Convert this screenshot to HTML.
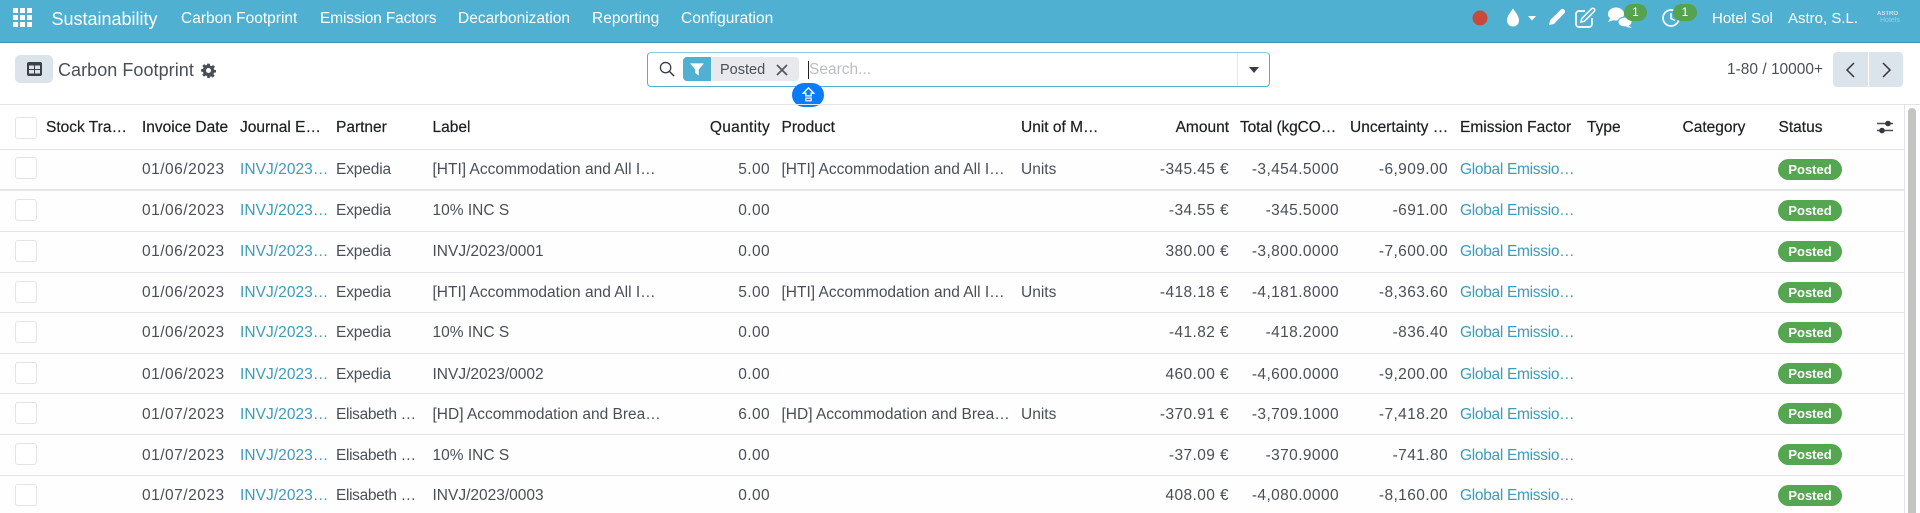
<!DOCTYPE html>
<html><head><meta charset="utf-8"><title>Carbon Footprint</title>
<style>
html,body{margin:0;padding:0;width:1920px;height:513px;overflow:hidden;background:#fff;font-family:"Liberation Sans",sans-serif;font-size:15.5px;color:#4a4f57}
*{box-sizing:border-box}
.a{position:absolute;white-space:nowrap}
#nav{position:absolute;left:0;top:0;width:1920px;height:43px;background:#4fb0d1;border-bottom:1px solid #3f98b5}
#nav .a{color:#fff;line-height:20px;top:9px}
.r{position:absolute;left:0;width:1904px;height:41px;border-bottom:1px solid #e2e4e7;background:#fefefe}
.r span{position:absolute;white-space:nowrap;line-height:20px;top:10px}
.r.x span{top:11px}
.cb{position:absolute;left:15px;top:8px;width:22px;height:22px;border:1px solid #e2e4e7;border-radius:3px;background:#fff}
.d{left:142px;letter-spacing:.5px}
.j{left:240px;color:#3d9bbb;letter-spacing:.05px}
.p{left:336px;letter-spacing:-.15px}
.l{left:432.5px}
.q{right:1134px;letter-spacing:.4px}
.pr{left:781.5px}
.u{left:1021px}
.am{right:675px;letter-spacing:.4px}
.t{right:565px;letter-spacing:.4px}
.un{right:456px;letter-spacing:.4px}
.e{left:1460px;color:#3d9bbb;letter-spacing:-.3px}
.r span.b,.r.x span.b{left:1778px;top:9px;width:64px;height:21px;background:#55a650;border-radius:11px;color:#fff;font-size:13px;font-weight:bold;text-align:center;line-height:21px}
.h{position:absolute;top:118px;line-height:20px;color:#1c2024;white-space:nowrap;-webkit-text-stroke:.2px #1c2024}
</style></head><body>
<div id="nav">
<svg class="a" style="left:13px;top:8px" width="19" height="19" viewBox="0 0 19 19" fill="#fff"><rect width="5" height="5"/><rect x="7" width="5" height="5"/><rect x="14" width="5" height="5"/><rect y="7" width="5" height="5"/><rect x="7" y="7" width="5" height="5"/><rect x="14" y="7" width="5" height="5"/><rect y="14" width="5" height="5"/><rect x="7" y="14" width="5" height="5"/><rect x="14" y="14" width="5" height="5"/></svg>
<div class="a" style="left:51.5px;font-size:18px">Sustainability</div>
<div class="a" style="left:181px">Carbon Footprint</div>
<div class="a" style="left:320px;letter-spacing:-.15px">Emission Factors</div>
<div class="a" style="left:458px">Decarbonization</div>
<div class="a" style="left:592px">Reporting</div>
<div class="a" style="left:681px">Configuration</div>
<svg class="a" style="left:1472px;top:0" width="230" height="36" viewBox="0 0 230 36">
<circle cx="8" cy="18" r="7.5" fill="#c9493f"/>
<path d="M41 8.5C44 13 47 16 47 20.5A6 6 0 0 1 35 20.5C35 16 38 13 41 8.5Z" fill="#fff"/>
<path d="M56 16h8l-4 4.5z" fill="#fff"/>
<path d="M77 25l1.200-5L89 9.500a2.500 2.500 0 0 1 3.500 3.500L82 24z" fill="#fff"/>
<path d="M113 11h-6a3 3 0 0 0-3 3v10a3 3 0 0 0 3 3h10a3 3 0 0 0 3-3v-6" fill="none" stroke="#fff" stroke-width="1.700"/>
<path d="M109 22l.8-3.500 9.700-9.700c.8-.8 2-.8 2.700 0s.8 2 0 2.700l-9.700 9.700z" fill="none" stroke="#fff" stroke-width="1.500"/>
<ellipse cx="144" cy="14" rx="8" ry="6.500" fill="#fff"/><path d="M139 17l-3 5 6-2z" fill="#fff"/>
<ellipse cx="153" cy="22" rx="7" ry="5" fill="#fff" stroke="#4fb0d1"/><path d="M156 25l4 3-6-1z" fill="#fff"/>
<circle cx="199" cy="18" r="8" fill="none" stroke="#fff" stroke-width="1.700"/><path d="M199 13v5.500l4 2" fill="none" stroke="#fff" stroke-width="1.500"/>
</svg>
<div class="a" style="left:1624px;top:4px;width:23px;height:17px;border-radius:9px;background:#55a24f;font-size:12px;line-height:17px;text-align:center">1</div>
<div class="a" style="left:1673px;top:4px;width:24px;height:17px;border-radius:9px;background:#55a24f;font-size:12px;line-height:17px;text-align:center">1</div>
<div class="a" style="left:1712px;top:9px;font-size:15px">Hotel Sol</div>
<div class="a" style="left:1788px;top:9px;font-size:15px">Astro, S.L.</div>
<div class="a" style="left:1877px;top:11px;font-size:6px;line-height:7px;font-weight:bold;opacity:.7">ASTRO</div>
<div class="a" style="left:1880px;top:17px;font-size:7px;line-height:8px;opacity:.4">Hotels</div>
</div>

<!-- toolbar -->
<div class="a" style="left:15px;top:55px;width:38px;height:28px;background:#dbe4ea;border-radius:5px"></div>
<svg class="a" style="left:27px;top:62px" width="15" height="14" viewBox="0 0 15 14"><rect width="15" height="14" rx="2" fill="#3b3f46"/><rect x="2" y="3.500" width="5" height="3.500" fill="#dbe4ea"/><rect x="8" y="3.500" width="5" height="3.500" fill="#dbe4ea"/><rect x="2" y="8" width="5" height="3.500" fill="#dbe4ea"/><rect x="8" y="8" width="5" height="3.500" fill="#dbe4ea"/></svg>
<div class="a" style="left:58px;top:59px;font-size:18px;line-height:22px;letter-spacing:.05px;color:#4a4f57">Carbon Footprint</div>
<svg class="a" style="left:201px;top:63px" width="15" height="15" viewBox="0 0 24 24"><path fill="#4a4f57" d="M10 1h4l.6 3.200 2.100.9 2.700-1.900 2.800 2.800-1.900 2.700.9 2.100L24 11.400v3.600l-3.200.6-.9 2.100 1.900 2.700-2.800 2.800-2.700-1.900-2.100.9L13.800 24h-3.600l-.6-3.200-2.100-.9-2.700 1.900L2 19l1.900-2.700-.9-2.100L0 13.600v-3.600l3.200-.6.900-2.100L2.200 4.600 5 1.800l2.700 1.900 1.700-.7zM12 8a4 4 0 1 0 0 8 4 4 0 0 0 0-8z"/></svg>

<div class="a" style="left:647px;top:52px;width:623px;height:35px;border:1px solid #4fb0d1;border-top-color:#8ccbe1;border-radius:4px;background:#fff"></div>
<div class="a" style="left:1237px;top:53px;width:1px;height:33px;background:#e4e6e9"></div>
<svg class="a" style="left:659px;top:61px" width="16" height="16" viewBox="0 0 17 17"><circle cx="7" cy="7" r="5.500" fill="none" stroke="#3b3f46" stroke-width="1.400"/><path d="M11 11l5 5" stroke="#3b3f46" stroke-width="1.600"/></svg>
<div class="a" style="left:683px;top:57px;width:116px;height:24px;background:#e7e9ed;border-radius:4px"></div>
<div class="a" style="left:683px;top:57px;width:28px;height:24px;background:#4fb0d1;border-radius:4px 0 0 4px"></div>
<svg class="a" style="left:690px;top:63px" width="14" height="13" viewBox="0 0 16 14"><path d="M0 0h16l-6 7v7l-4-3V7z" fill="#fff"/></svg>
<div class="a" style="left:720px;top:60px;font-size:14.500px;line-height:20px;color:#4a4f57">Posted</div>
<svg class="a" style="left:776px;top:64px" width="12" height="12" viewBox="0 0 12 12"><path d="M1 1l10 10M11 1L1 11" stroke="#555a62" stroke-width="1.800"/></svg>
<div class="a" style="left:808px;top:61px;width:1px;height:18px;background:#222"></div>
<div class="a" style="left:809px;top:60px;line-height:20px;color:#b9bdc4">Search...</div>
<svg class="a" style="left:1249px;top:67px" width="10" height="6" viewBox="0 0 10 6"><path d="M0 0h10L5 6z" fill="#3b3f46"/></svg>
<div class="a" style="left:792px;top:83px;width:32px;height:24px;border-radius:12px;background:#0a7cf5"></div>
<svg class="a" style="left:801.500px;top:87px" width="13" height="16" viewBox="0 0 14 18"><path d="M7 1l6 6H10v3H4V7H1z" fill="none" stroke="#fff" stroke-width="1.500"/><rect x="4" y="12.500" width="6" height="3" fill="none" stroke="#fff" stroke-width="1.300"/></svg>

<div class="a" style="left:1727px;top:60px;line-height:20px;font-size:15.500px;color:#4a4f57">1-80 / 10000+</div>
<div class="a" style="left:1833px;top:52px;width:35px;height:35px;background:#dbe4ea;border-radius:4px 0 0 4px"></div>
<div class="a" style="left:1869px;top:52px;width:34px;height:35px;background:#dbe4ea;border-radius:0 4px 4px 0"></div>
<svg class="a" style="left:1845px;top:62px" width="12" height="16" viewBox="0 0 12 16"><path d="M9 1L2 8l7 7" fill="none" stroke="#33373d" stroke-width="1.500"/></svg>
<svg class="a" style="left:1880px;top:62px" width="12" height="16" viewBox="0 0 12 16"><path d="M3 1l7 7-7 7" fill="none" stroke="#33373d" stroke-width="1.500"/></svg>

<!-- header -->
<div class="a" style="left:0;top:104px;width:1920px;height:1px;background:#e2e4e7"></div>
<div class="a" style="left:0;top:149px;width:1904px;height:1px;background:#e2e4e7"></div>
<div class="a" style="left:1904px;top:105px;width:1px;height:408px;background:#e2e4e7"></div>
<div class="a" style="left:1908px;top:108px;width:8px;height:405px;background:#c4c4c4;border-radius:4px 4px 0 0"></div>
<div class="a" style="left:15px;top:117px;width:22px;height:22px;border:1px solid #e2e4e7;border-radius:3px"></div>
<div class="h" style="left:46px">Stock Tra…</div>
<div class="h" style="left:142px">Invoice Date</div>
<div class="h" style="left:240px">Journal E…</div>
<div class="h" style="left:336px">Partner</div>
<div class="h" style="left:432.500px">Label</div>
<div class="h" style="right:1150px;letter-spacing:.3px">Quantity</div>
<div class="h" style="left:781.500px">Product</div>
<div class="h" style="left:1021px">Unit of M…</div>
<div class="h" style="right:691px">Amount</div>
<div class="h" style="left:1240px;letter-spacing:-.1px">Total (kgCO…</div>
<div class="h" style="left:1350px">Uncertainty …</div>
<div class="h" style="left:1460px">Emission Factor</div>
<div class="h" style="left:1587px">Type</div>
<div class="h" style="left:1682.500px">Category</div>
<div class="h" style="left:1778.500px">Status</div>
<svg class="a" style="left:1877px;top:120px" width="16" height="14" viewBox="0 0 16 14"><path d="M0 3.500h16M0 10.500h16" stroke="#4a4f57" stroke-width="1.500"/><circle cx="11" cy="3.500" r="2.800" fill="#33373d"/><circle cx="5" cy="10.500" r="2.800" fill="#33373d"/></svg>

<!-- rows -->
<div class="r" style="top:150px;border-bottom:2px solid #e5e7ea"><div class="cb" style="top:7px"></div><span class="d">01/06/2023</span><span class="j">INVJ/2023…</span><span class="p">Expedia</span><span class="l">[HTI] Accommodation and All I…</span><span class="q">5.00</span><span class="pr">[HTI] Accommodation and All I…</span><span class="u">Units</span><span class="am">-345.45 €</span><span class="t">-3,454.5000</span><span class="un">-6,909.00</span><span class="e">Global Emissio…</span><span class="b">Posted</span></div>
<div class="r" style="top:191px"><div class="cb"></div><span class="d">01/06/2023</span><span class="j">INVJ/2023…</span><span class="p">Expedia</span><span class="l">10% INC S</span><span class="q">0.00</span><span class="am">-34.55 €</span><span class="t">-345.5000</span><span class="un">-691.00</span><span class="e">Global Emissio…</span><span class="b">Posted</span></div>
<div class="r" style="top:232px"><div class="cb"></div><span class="d">01/06/2023</span><span class="j">INVJ/2023…</span><span class="p">Expedia</span><span class="l">INVJ/2023/0001</span><span class="q">0.00</span><span class="am">380.00 €</span><span class="t">-3,800.0000</span><span class="un">-7,600.00</span><span class="e">Global Emissio…</span><span class="b">Posted</span></div>
<div class="r" style="top:273px;height:40px"><div class="cb"></div><span class="d">01/06/2023</span><span class="j">INVJ/2023…</span><span class="p">Expedia</span><span class="l">[HTI] Accommodation and All I…</span><span class="q">5.00</span><span class="pr">[HTI] Accommodation and All I…</span><span class="u">Units</span><span class="am">-418.18 €</span><span class="t">-4,181.8000</span><span class="un">-8,363.60</span><span class="e">Global Emissio…</span><span class="b">Posted</span></div>
<div class="r" style="top:313px"><div class="cb"></div><span class="d">01/06/2023</span><span class="j">INVJ/2023…</span><span class="p">Expedia</span><span class="l">10% INC S</span><span class="q">0.00</span><span class="am">-41.82 €</span><span class="t">-418.2000</span><span class="un">-836.40</span><span class="e">Global Emissio…</span><span class="b">Posted</span></div>
<div class="r x" style="top:354px;height:40px"><div class="cb"></div><span class="d">01/06/2023</span><span class="j">INVJ/2023…</span><span class="p">Expedia</span><span class="l">INVJ/2023/0002</span><span class="q">0.00</span><span class="am">460.00 €</span><span class="t">-4,600.0000</span><span class="un">-9,200.00</span><span class="e">Global Emissio…</span><span class="b">Posted</span></div>
<div class="r x" style="top:394px"><div class="cb"></div><span class="d">01/07/2023</span><span class="j">INVJ/2023…</span><span class="p" style="letter-spacing:-.35px">Elisabeth …</span><span class="l">[HD] Accommodation and Brea…</span><span class="q">6.00</span><span class="pr">[HD] Accommodation and Brea…</span><span class="u">Units</span><span class="am">-370.91 €</span><span class="t">-3,709.1000</span><span class="un">-7,418.20</span><span class="e">Global Emissio…</span><span class="b">Posted</span></div>
<div class="r x" style="top:435px"><div class="cb"></div><span class="d">01/07/2023</span><span class="j">INVJ/2023…</span><span class="p" style="letter-spacing:-.35px">Elisabeth …</span><span class="l">10% INC S</span><span class="q">0.00</span><span class="am">-37.09 €</span><span class="t">-370.9000</span><span class="un">-741.80</span><span class="e">Global Emissio…</span><span class="b">Posted</span></div>
<div class="r" style="top:476px;height:37px;border-bottom:none"><div class="cb"></div><span class="d">01/07/2023</span><span class="j">INVJ/2023…</span><span class="p" style="letter-spacing:-.35px">Elisabeth …</span><span class="l">INVJ/2023/0003</span><span class="q">0.00</span><span class="am">408.00 €</span><span class="t">-4,080.0000</span><span class="un">-8,160.00</span><span class="e">Global Emissio…</span><span class="b">Posted</span></div>
</body></html>
